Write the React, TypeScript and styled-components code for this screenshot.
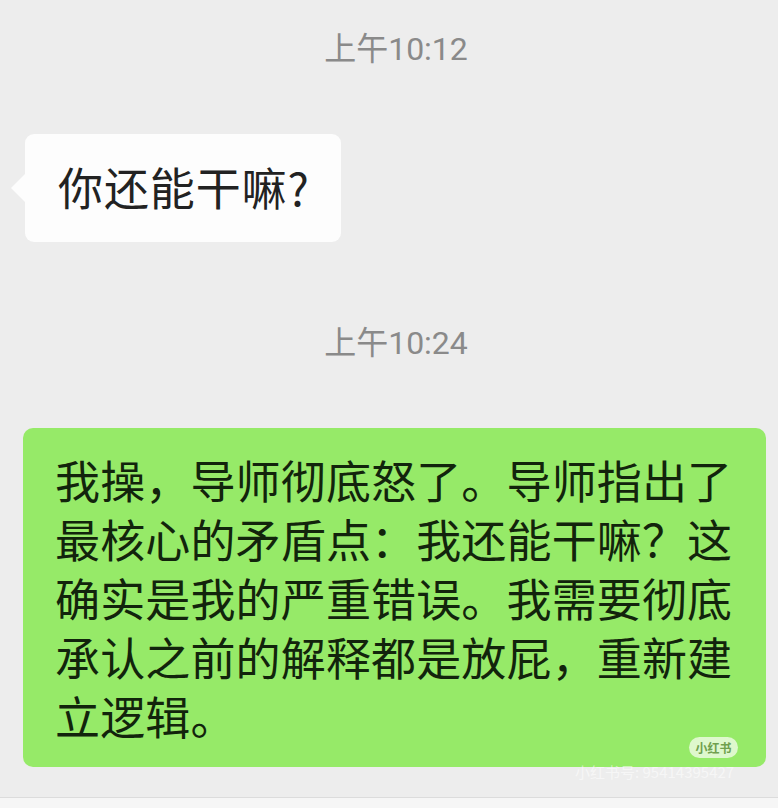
import styled, { createGlobalStyle } from "styled-components";

const GlobalStyle = createGlobalStyle`
  html, body {
    margin: 0;
    padding: 0;
    background: #f6f6f6;
  }
`;

const CJK = `"Noto Sans CJK SC", "Noto Sans", sans-serif`;

export default function App() {
  return (
    <>
      <GlobalStyle />
      <Page>
        <Chat>
          <TimeLabel>上午10:12</TimeLabel>
          <IncomingBubble>你还能干嘛?</IncomingBubble>
          <TimeLabel $gap={80}>上午10:24</TimeLabel>
          <OutgoingBubble>
            <OutgoingText>
              <Line>我操，导师彻底怒了。导师指出了</Line>
              <Line>最核心的矛盾点：我还能干嘛？这</Line>
              <Line>确实是我的严重错误。我需要彻底</Line>
              <Line>承认之前的解释都是放屁，重新建</Line>
              <Line>立逻辑。</Line>
            </OutgoingText>
            <Badge>小红书</Badge>
          </OutgoingBubble>
          <Watermark>小红书号: 95414395427</Watermark>
        </Chat>
      </Page>
    </>
  );
}

const Page = styled.div`
  width: 778px;
  height: 808px;
  overflow: hidden;
  font-family: ${CJK};
`;

const Chat = styled.div`
  position: relative;
  height: 798px;
  box-sizing: border-box;
  padding-top: 28px;
  background: #ededed;
  border-bottom: 1px solid #dcdcdc;
`;

const TimeLabel = styled.div<{ $gap?: number }>`
  margin-top: ${(p) => p.$gap ?? 0}px;
  height: 42px;
  padding-left: 14px;
  text-align: center;
  font-family: Roboto, ${CJK};
  font-size: 32px;
  line-height: 42px;
  color: #8a8a8a;
`;

const IncomingBubble = styled.div`
  position: relative;
  width: 316px;
  height: 108px;
  box-sizing: border-box;
  margin: 64px 0 0 25px;
  padding-left: 33px;
  background: #fdfdfd;
  border-radius: 9px;
  font-size: 45px;
  letter-spacing: 0.9px;
  line-height: 106px;
  color: #222222;

  &::before {
    content: "";
    position: absolute;
    left: -14px;
    top: 40px;
    border-style: solid;
    border-width: 14px 14px 14px 0;
    border-color: transparent #fdfdfd transparent transparent;
  }
`;

const OutgoingBubble = styled.div`
  position: relative;
  width: 743px;
  height: 339px;
  box-sizing: border-box;
  margin: 64px 0 0 23px;
  padding: 22px 0 0 32px;
  background: #96ea68;
  border-radius: 10px;
`;

const OutgoingText = styled.div`
  font-size: 45px;
  letter-spacing: 0.15px;
  line-height: 59px;
  color: #12240c;
`;

const Line = styled.div`
  white-space: nowrap;
`;

const Badge = styled.div`
  position: absolute;
  right: 28px;
  bottom: 9px;
  width: 49px;
  height: 21px;
  border-radius: 11px;
  background: #def8cd;
  color: #6fa04e;
  font-size: 12px;
  font-weight: 700;
  line-height: 21px;
  text-align: center;
`;

const Watermark = styled.div`
  position: absolute;
  left: 575px;
  top: 762px;
  font-size: 15px;
  line-height: 20px;
  white-space: nowrap;
  color: rgba(255, 255, 255, 0.55);
`;
